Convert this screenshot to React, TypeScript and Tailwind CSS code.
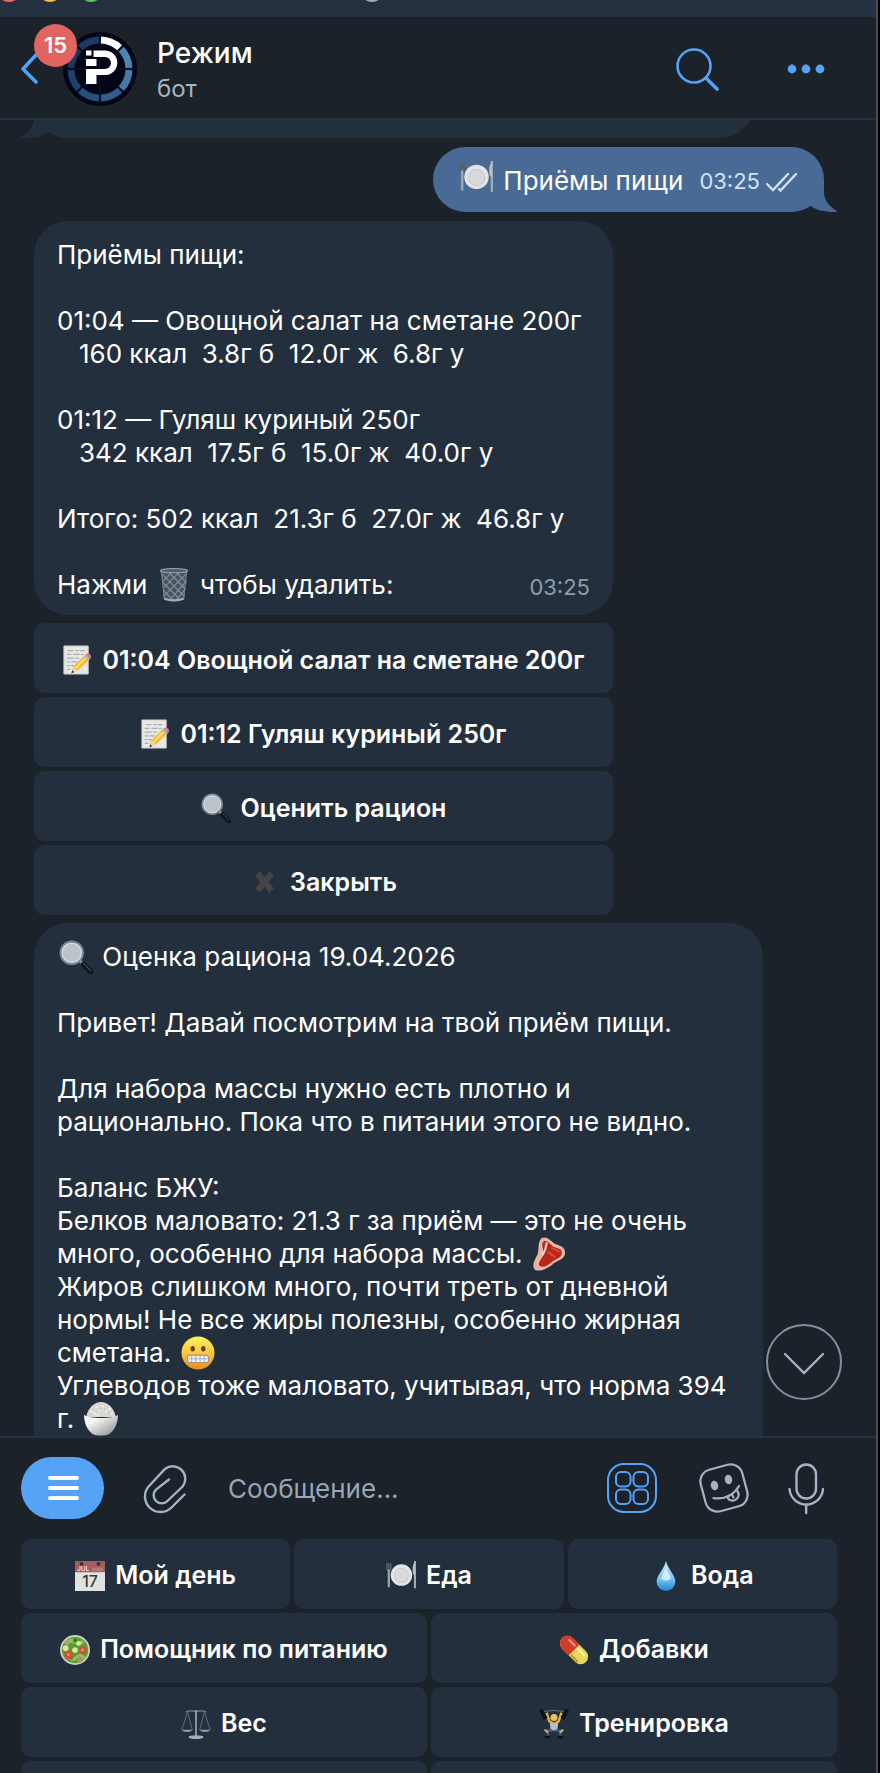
import type { ReactNode } from "react";

const pictures: Record<string, ReactNode> = {
  plate: (
    <>
      <path d="M1 2v7q2 3 4 0V2M3 2v7" stroke="#56606b" strokeWidth="1.6" fill="none" />
      <path d="M3 10v17" stroke="#9aa5ae" strokeWidth="2.4" strokeLinecap="round" />
      <path d="M31 1v27" stroke="#a2acb5" strokeWidth="2.4" strokeLinecap="round" />
      <path d="M31 1c-3 3-3 8-2 13l2 1z" fill="#b9c1c7" />
      <circle cx="16.5" cy="15" r="11.5" fill="#e4e4e4" />
      <circle cx="16.5" cy="15.5" r="7.5" fill="#d8dadb" stroke="#c3c6c8" />
    </>
  ),
  trash: (
    <>
      <path d="M4 2h24l-3 28q-9 3-18 0z" fill="#4a535e" />
      <path
        d="M5 6l21 21M10 3l17 17M17 3l11 11M5 13l16 16M6 21l9 9M27 6L6 27M22 3L6 19M15 3L5 13M27 13L12 30M26 21l-8 9"
        stroke="#8793a0"
        strokeWidth="1"
      />
      <path d="M4 2l3 28M28 2l-3 28" stroke="#7d8792" />
      <ellipse cx="16" cy="2.5" rx="13" ry="2" fill="#535d6b" stroke="#9aa4b1" />
      <path d="M7 29q9 3 18 0" stroke="#a6abb1" strokeWidth="2" fill="none" />
    </>
  ),
  memo: (
    <>
      <path d="M2 1h26v30H2z" fill="#e8e8e7" stroke="#c4c4c3" />
      <path
        d="M6 6h6m2 0h4m1 0h5M5 10h5m2 0h7m1 0h3M5 14h8m1 0h4M5 18h4m1 0h6M5 22h3m1 0h4M5 26h4"
        stroke="#aeb0b0"
        strokeWidth="1.3"
      />
      <path d="M10 30l2-7 12-12 5 5-12 11z" fill="#f5bf31" />
      <path d="M14 25l12-12" stroke="#ffdf72" strokeWidth="2" />
      <path d="M10 30l2-7 5 4z" fill="#ead3a5" />
      <path d="M10 30l1-3 2 2z" fill="#34312d" />
      <path d="M23 12l2-2 5 5-2 2z" fill="#a9b7bf" />
      <path d="M25 10q3-2 5 0t0 5z" fill="#e67777" />
    </>
  ),
  search: (
    <>
      <path d="M20 20l3 3" stroke="#8c959c" strokeWidth="3" />
      <path d="M23 23l7 7" stroke="#11161b" strokeWidth="5" strokeLinecap="round" />
      <path d="M23 22l7 7" stroke="#4e565d" strokeWidth="1" />
      <circle cx="12" cy="12" r="10.5" fill="#bac3c8" stroke="#7b8a98" strokeWidth="2" />
      <circle cx="12" cy="12" r="9" fill="none" stroke="#dde1e3" />
    </>
  ),
  cross: <path d="M8 7l15 18M23 7L8 25" stroke="#454545" strokeWidth="6.5" />,
  steak: (
    <>
      <path d="M9 1c5-2 8 2 12 5 5 2 11 3 10 10-1 6-8 6-12 10-5 4-12 7-16 5-4-4 0-10 2-14 2-5 0-12 4-16z" fill="#e7b5a4" />
      <path d="M11 4c4-1 6 3 9 5 4 2 9 2 8 7-1 4-7 5-11 9-4 3-8 4-10 2-2-3 3-7 4-11 0-4-3-9 0-12z" fill="#b9261d" />
      <path d="M18 10l8 4M15 14l7 5" stroke="#d74b3c" strokeWidth="2" />
      <path d="M14 5q-1 7-4 12" stroke="#f3d5c7" strokeWidth="2" fill="none" />
    </>
  ),
  face: (
    <>
      <circle cx="16" cy="16" r="15.5" fill="url(#face)" />
      <ellipse cx="11" cy="12" rx="2" ry="2.6" fill="#65380d" />
      <ellipse cx="21" cy="12" rx="2" ry="2.6" fill="#65380d" />
      <rect x="6" y="18" width="20" height="7" rx="3" fill="#f2f2f2" stroke="#a8937f" />
      <path d="M7 21.5h18M10 18v7m4-7v7m4-7v7m4-7v7" stroke="#a4a4a4" strokeWidth="0.8" />
    </>
  ),
  rice: (
    <>
      <path d="M2 14C4 5 10 0 16 0s12 5 14 14z" fill="#d9d7d3" />
      <path d="M6 9h2m3-4h2m4-1h2m4 3h2M9 11h2m3-3h2m4 1h2m3 2h2M12 12h2" stroke="#f6f5f2" strokeWidth="1.6" />
      <path d="M9 7h1m5-1h1m3 1h1m3 3h1M7 11h1" stroke="#b3b0aa" />
      <path d="M0 12c4 4 28 4 32 0 0 9-4 15-8 18-4 2-12 2-16 0-4-3-8-9-8-18z" fill="url(#bowl)" />
    </>
  ),
  calendar: (
    <>
      <path d="M0 0h32v32H0z" fill="#e2e2e2" />
      <path d="M0 0h32v12H0z" fill="#a85a5d" />
      <path d="M18 7h12v4H18z" fill="#b57779" />
      <circle cx="7" cy="3" r="2" fill="#34313a" />
      <circle cx="25" cy="3" r="2" fill="#34313a" />
      <text x="2" y="11" fontSize="7" fontWeight="600" fill="#eedede">JUL</text>
      <text x="16" y="28" fontSize="17" fontWeight="500" textAnchor="middle" fill="#3a3a3a">17</text>
    </>
  ),
  drop: (
    <>
      <path d="M16 0c2 9 10 15 10 22a10 10 0 0 1-20 0C6 15 14 9 16 0z" fill="url(#drop)" />
      <path d="M16 6c1 5 5 9 5 13q-5 4-10 0c0-4 4-8 5-13z" fill="#e3f6fd" opacity="0.8" />
    </>
  ),
  salad: (
    <>
      <circle cx="16" cy="16" r="15" fill="#5c9a32" stroke="#c9cec9" strokeWidth="2" />
      <path d="M6 10q5-6 9-3t10 0M8 22q6 6 10 2t8 1" stroke="#93c553" strokeWidth="4" fill="none" />
      <circle cx="8" cy="8" r="2.5" fill="#bc9a72" />
      <circle cx="21" cy="26" r="3" fill="#b58f6c" />
      <circle cx="12" cy="24" r="2" fill="#3e7a24" />
      <circle cx="16" cy="6" r="2" fill="#3e7a24" />
      <circle cx="9" cy="21" r="4.5" fill="#dd4a36" />
      <circle cx="24" cy="16" r="4" fill="#dd4a36" />
      <circle cx="9" cy="21" r="1.5" fill="#f0937a" />
      <circle cx="24" cy="16" r="1.5" fill="#f0937a" />
      <circle cx="6" cy="14" r="3" fill="#d8eba0" />
      <circle cx="16" cy="16" r="3" fill="#d8eba0" />
      <circle cx="20" cy="9" r="2.5" fill="#d8eba0" />
    </>
  ),
  pill: (
    <g transform="rotate(45 16 16)">
      <rect x="-2" y="8" width="36" height="16" rx="8" fill="#e8d55c" />
      <path d="M16 8H6a8 8 0 0 0 0 16h10z" fill="#d03b2c" />
      <path d="M5 12h8" stroke="#f09183" strokeWidth="2.5" strokeLinecap="round" />
      <path d="M18 12h10" stroke="#f9f0a0" strokeWidth="2.5" strokeLinecap="round" />
      <path d="M18 22h9" stroke="#b5992f" strokeWidth="2" strokeLinecap="round" />
    </g>
  ),
  scales: (
    <>
      <path d="M5 3q6-2 11 0 5-2 11 0" stroke="#76828a" strokeWidth="1.5" fill="none" />
      <path d="M7 3L1 22M7 3l5 19M25 3l-5 19M25 3l6 19" stroke="#65717a" fill="none" />
      <path d="M16 1v28" stroke="#8e9aa2" strokeWidth="2" />
      <path d="M0 22h13q-6 5-13 0zM19 22h13q-6 5-13 0z" fill="#93a2ad" />
      <ellipse cx="16" cy="30" rx="8" ry="2" fill="#a4afb6" />
    </>
  ),
  lifter: (
    <>
      <path d="M2 3q14-3 28 0" stroke="#727476" fill="none" />
      <path d="M8 4l3 9 5 3 5-3 3-9" stroke="#e2b24a" strokeWidth="2.6" fill="none" />
      <path d="M0 1l4-1 5 9-4 3zM32 1l-4-1-5 9 4 3z" fill="#0f1215" />
      <circle cx="16" cy="9" r="3.8" fill="#efc15a" />
      <path d="M11.500 15h9l-1 8h-7z" fill="#b9bdc1" />
      <path d="M14 23l-6 0 2 5M18 23l6 0-2 5" stroke="#285d9f" strokeWidth="3" fill="none" />
      <path d="M6 22l4 3M26 22l-4 3" stroke="#e2b24a" strokeWidth="2" />
      <path d="M6 30h6M20 30h6" stroke="#0f1215" strokeWidth="2.6" />
    </>
  ),
};

function Emoji({ name, large }: { name: string; large?: boolean }) {
  return (
    <svg
      viewBox="0 0 32 32"
      aria-hidden="true"
      className={large ? "mx-0.5 -mt-3 -mb-2 inline-block h-[34px] w-[34px] shrink-0 align-middle" : "h-[30px] w-[30px] shrink-0"}
    >
      {pictures[name]}
    </svg>
  );
}

function Key({ icon, text }: { icon?: string; text?: string }) {
  return (
    <button
      type="button"
      className="flex h-[70px] flex-1 cursor-pointer items-center justify-center gap-2.5 rounded-[10px] bg-[#242f3e] px-2 pt-1 text-[25px] font-semibold"
    >
      {icon && <Emoji name={icon} />}
      {text}
    </button>
  );
}

const messageActions = [
  { icon: "memo", text: "01:04 Овощной салат на сметане 200г" },
  { icon: "memo", text: "01:12 Гуляш куриный 250г" },
  { icon: "search", text: "Оценить рацион" },
  { icon: "cross", text: "Закрыть" },
];

const keyboard = [
  [
    { icon: "calendar", text: "Мой день" },
    { icon: "plate", text: "Еда" },
    { icon: "drop", text: "Вода" },
  ],
  [
    { icon: "salad", text: "Помощник по питанию" },
    { icon: "pill", text: "Добавки" },
  ],
  [
    { icon: "scales", text: "Вес" },
    { icon: "lifter", text: "Тренировка" },
  ],
  [{}, {}],
];

// Ring segments, clockwise from the top
const ring = ["#ffffff", "#4a86b1", "#447ba6", "#2e5f8c", "#24507c", "#1d4169", "#1a3960", "#1a3a63"];

function Avatar() {
  return (
    <svg viewBox="0 0 74 74" className="h-[74px] w-[74px]" aria-label="Режим">
      <circle cx="37" cy="37" r="37" fill="#020417" />
      <path d="M37 0v74M0 37h74" stroke="#10152a" />
      {ring.map((color, i) => (
        <path
          key={i}
          d="M38 8A29 29 0 0 1 56.7 15.8"
          stroke={color}
          strokeWidth="7"
          fill="none"
          transform={`rotate(${i * 45} 37 37)`}
        />
      ))}
      <path d="M23 18.5h5.5v5H23zM23 27h10.500v7H23z" fill="#fff" />
      <path d="M30.5 18.5H42a12.300 12.300 0 0 1 0 24.600h-8.500V52H23V37h19a6 6 0 0 0 0-12H30.500z" fill="#fff" />
    </svg>
  );
}

function Tail({ className }: { className: string }) {
  return (
    <svg viewBox="0 0 28 32" className={className} aria-hidden="true">
      <path d="M0 25V0H15V12C15 21 21 27 28 31C28 32 27 32 26 32C15 32 7 30 0 25z" fill="currentColor" />
    </svg>
  );
}

export default function App() {
  return (
    <div className="flex h-screen overflow-hidden bg-black font-['Inter',sans-serif] text-white">
      <svg width="0" height="0" className="absolute" aria-hidden="true">
        <defs>
          <linearGradient id="bowl" x1="0" x2="1" y1="0" y2="1">
            <stop offset="0.3" stopColor="#f4f4f4" />
            <stop offset="1" stopColor="#858585" />
          </linearGradient>
          <linearGradient id="face" x1="0" x2="0" y1="0" y2="1">
            <stop offset="0" stopColor="#fff15c" />
            <stop offset="0.5" stopColor="#fdc740" />
            <stop offset="1" stopColor="#e88b22" />
          </linearGradient>
          <linearGradient id="drop" x1="0" x2="0" y1="0" y2="1">
            <stop offset="0" stopColor="#c9eafa" />
            <stop offset="0.6" stopColor="#72c4f2" />
            <stop offset="1" stopColor="#2383d5" />
          </linearGradient>
        </defs>
      </svg>
      <div className="mr-0.5 flex min-w-0 flex-1 flex-col border-r-2 border-[#474c54] bg-[#1b222a]">
        {/* Window bar */}
        <div className="h-[17px] shrink-0 overflow-hidden bg-[#253040]">
          <div className="-mt-[22px] flex gap-[17px]">
            <span className="-ml-[3px] h-6 w-6 rounded-full bg-[#ec6a5e]"></span>
            <span className="h-6 w-6 rounded-full bg-[#f4bf4f]"></span>
            <span className="h-6 w-6 rounded-full bg-[#61c554]"></span>
            <span className="ml-60 h-6 w-6 rounded-full bg-[#a3a9b0]"></span>
          </div>
        </div>

        {/* Chat header */}
        <header className="flex h-[103px] shrink-0 items-center border-b-2 border-[#253040] pt-0.5 pl-5">
          <a href="#chats" className="relative flex h-[74px] w-[43px] items-center" aria-label="Назад, 15">
            <svg viewBox="0 0 24 32" className="h-8 w-6" fill="none" stroke="#54a3f7" strokeWidth="3.5" strokeLinecap="round" strokeLinejoin="round">
              <path d="M16 2L3 16l13 13" />
            </svg>
            <span className="absolute -top-2 left-[14px] z-10 flex h-[43px] w-[43px] items-center justify-center rounded-full bg-[#e0645f] text-[22px] font-semibold">
              15
            </span>
          </a>
          <Avatar />
          <div className="ml-5 grow pt-1 leading-9">
            <h1 className="text-[28px] font-medium">Режим</h1>
            <p className="text-[24px] text-[#a5b3c6]">бот</p>
          </div>
          <button type="button" className="cursor-pointer" aria-label="Поиск">
            <svg viewBox="0 0 44 44" className="h-11 w-11" fill="none" stroke="#54a3f7" strokeWidth="2.6" strokeLinecap="round">
              <circle cx="19" cy="19" r="16.5" />
              <path d="M31 31l11 11" strokeWidth="3.6" />
            </svg>
          </button>
          <button type="button" className="mr-[49px] ml-16 cursor-pointer" aria-label="Ещё">
            <svg viewBox="0 0 44 12" className="h-3 w-11" fill="#54a3f7">
              <circle cx="9" cy="6" r="4.4" />
              <circle cx="23" cy="6" r="4.4" />
              <circle cx="37" cy="6" r="4.4" />
            </svg>
          </button>
        </header>

        {/* Messages */}
        <main className="relative min-h-0 flex-1 overflow-hidden">
          <div className="flex flex-col pr-[52px] pl-[34px] text-[26px] leading-[33px]">
            <div className="relative h-[18px] w-[720px] max-w-full">
              <div className="h-full overflow-hidden">
                <div className="-mt-[52px] h-[70px] rounded-[34px] bg-[#242f3e]"></div>
              </div>
              <Tail className="absolute bottom-0 -left-[13px] h-8 w-7 -scale-x-100 text-[#242f3e]" />
            </div>

            <div className="relative mt-[9px] flex h-[65px] items-center self-end rounded-[33px] bg-[#496a95] pr-[26px] pl-6">
              <Tail className="absolute -right-[13px] bottom-0 h-8 w-7 text-[#496a95]" />
              <Emoji name="plate" large />
              <span className="ml-2 pt-0.5">Приёмы пищи</span>
              <time className="mt-1 ml-4 text-[22px] text-[#d3e2f2]">03:25</time>
              <svg viewBox="0 0 32 20" className="mt-1 ml-1.5 h-5 w-8" fill="none" stroke="#d3e2f2" strokeWidth="2.4" strokeLinecap="round">
                <path d="M1 12l6 6L22 2M13 17l1.5 1.500L30 2" />
              </svg>
            </div>

            <div className="mt-[9px] w-[579px] max-w-full rounded-[34px] bg-[#242f3e] px-[23px] pt-[17px] pb-[14px] whitespace-pre-wrap">
              <p>Приёмы пищи:</p>
              <p className="mt-[33px]">{"01:04 — Овощной салат на сметане 200г\n   160 ккал  3.8г б  12.0г ж  6.8г у"}</p>
              <p className="mt-[33px]">{"01:12 — Гуляш куриный 250г\n   342 ккал  17.5г б  15.0г ж  40.0г у"}</p>
              <p className="mt-[33px]">{"Итого: 502 ккал  21.3г б  27.0г ж  46.8г у"}</p>
              <div className="mt-[33px] flex justify-between">
                <p>
                  Нажми <Emoji name="trash" large /> чтобы удалить:
                </p>
                <time className="self-end text-[22px] leading-7 text-[#8f9dae]">03:25</time>
              </div>
            </div>

            <div className="mt-2 flex w-[579px] max-w-full flex-col gap-1">
              {messageActions.map((action) => (
                <div key={action.text} className="flex">
                  <Key {...action} />
                </div>
              ))}
            </div>

            <div className="mt-2 w-[729px] max-w-full rounded-t-[34px] bg-[#242f3e] px-[23px] pt-[17px] pb-3">
              <p>
                <Emoji name="search" large /> Оценка рациона 19.04.2026
              </p>
              <p className="mt-[33px]">Привет! Давай посмотрим на твой приём пищи.</p>
              <p className="mt-[33px]">
                Для набора массы нужно есть плотно и рационально. Пока что в питании этого не видно.
              </p>
              <p className="mt-[33px]">Баланс БЖУ:</p>
              <p>
                Белков маловато: 21.3 г за приём — это не очень много, особенно для набора массы. <Emoji name="steak" large />
              </p>
              <p>
                Жиров слишком много, почти треть от дневной нормы! Не все жиры полезны, особенно жирная сметана.{" "}
                <Emoji name="face" large />
              </p>
              <p>
                Углеводов тоже маловато, учитывая, что норма 394 г. <Emoji name="rice" large />
              </p>
            </div>
          </div>

          <button
            type="button"
            aria-label="Вниз"
            className="absolute right-[34px] bottom-9 flex h-[76px] w-[76px] cursor-pointer items-center justify-center rounded-full border-2 border-[#8290a0] bg-[#1b222a]"
          >
            <svg viewBox="0 0 40 24" className="mt-1 h-6 w-10" fill="none" stroke="#a5b3c6" strokeWidth="2.4" strokeLinecap="round">
              <path d="M1 2l19 19L39 2" />
            </svg>
          </button>
        </main>

        {/* Input and bot keyboard */}
        <footer className="shrink-0 border-t-2 border-[#253040]">
          <div className="flex h-[101px] items-center gap-9 pr-[52px] pb-0.5 pl-[21px]">
            <button
              type="button"
              aria-label="Меню"
              className="flex h-[62px] w-[83px] shrink-0 cursor-pointer items-center justify-center rounded-[31px] bg-[#54a3f7]"
            >
              <svg viewBox="0 0 32 28" className="h-7 w-8" stroke="#fff" strokeWidth="3.8" strokeLinecap="round">
                <path d="M3 4h27M3 14h27M3 24h27" />
              </svg>
            </button>
            <button type="button" aria-label="Прикрепить" className="shrink-0 cursor-pointer">
              <svg viewBox="0 0 50 54" className="h-[54px] w-[50px]" fill="none" stroke="#a5b3c6" strokeWidth="2.4" strokeLinecap="round">
                <path d="M44.5 33.5L31.5 46.5A15.500 15.500 0 0 1 9.500 24.500L25 8A12.500 12.500 0 0 1 42.600 25.500L27.400 40A8 8 0 0 1 16 28.600L29 18.500" />
              </svg>
            </button>
            <input
              type="text"
              aria-label="Сообщение"
              placeholder="Сообщение..."
              className="min-w-0 flex-1 px-0.5 pt-0.5 text-[26px] outline-none placeholder:text-[#98a6b8]"
            />
            <button type="button" aria-label="Клавиатура бота" className="shrink-0 cursor-pointer">
              <svg viewBox="0 0 56 56" className="h-14 w-14" fill="none" stroke="#54a3f7" strokeWidth="2">
                <rect x="4" y="4" width="48" height="48" rx="16" />
                <rect x="12" y="12" width="14.5" height="14.5" rx="5" />
                <rect x="29.500" y="12" width="14.500" height="14.500" rx="5" />
                <rect x="12" y="29.500" width="14.500" height="14.500" rx="5" />
                <rect x="29.500" y="29.500" width="14.500" height="14.500" rx="5" />
              </svg>
            </button>
            <button type="button" aria-label="Стикеры" className="shrink-0 cursor-pointer">
              <svg viewBox="0 0 56 56" className="h-14 w-14" fill="none" stroke="#a5b3c6" strokeWidth="2.2" strokeLinecap="round">
                <rect x="6.5" y="6.5" width="43" height="43" rx="12" transform="rotate(-15 28 28)" />
                <ellipse cx="18.5" cy="25.5" rx="2.6" ry="3.7" fill="#a5b3c6" transform="rotate(-12 18.5 25.5)" />
                <ellipse cx="32.5" cy="19.5" rx="2.6" ry="3.7" fill="#a5b3c6" transform="rotate(-12 32.5 19.5)" />
                <path d="M17.5 38.2Q35 40 43 26" />
                <path d="M31.5 37c1 4 6 4.500 8.500 2.500s4-5 1-9M36 34.500l1.500 3" />
              </svg>
            </button>
            <button type="button" aria-label="Голосовое сообщение" className="shrink-0 cursor-pointer">
              <svg viewBox="0 0 36 54" className="h-[54px] w-9" fill="none" stroke="#a5b3c6" strokeWidth="2.4" strokeLinecap="round">
                <rect x="8.5" y="3.5" width="19.5" height="34" rx="9.75" />
                <path d="M1.5 28a16.800 16.800 0 0 0 33.500 0M18.200 45v7" />
              </svg>
            </button>
          </div>
          <div className="flex max-h-[234px] flex-col gap-1 overflow-hidden pr-[39px] pl-[21px]">
            {keyboard.map((row, i) => (
              <div key={i} className="flex shrink-0 gap-1">
                {row.map((key, j) => (
                  <Key key={j} {...key} />
                ))}
              </div>
            ))}
          </div>
        </footer>
      </div>
    </div>
  );
}
